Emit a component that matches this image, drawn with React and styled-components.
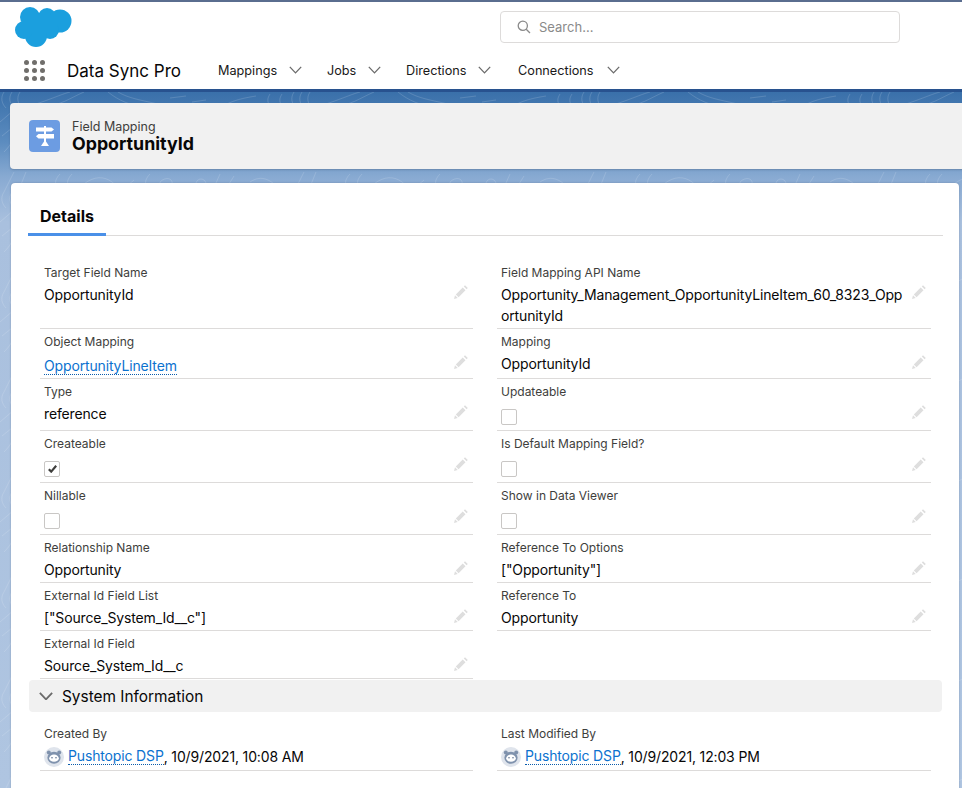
import React from "react";
import styled, { createGlobalStyle } from "styled-components";

const Global = createGlobalStyle`
  html, body { margin: 0; padding: 0; background: #fff; }
  body { font-family: Inter, "Liberation Sans", sans-serif; color: #080707; -webkit-font-smoothing: antialiased; }
  * { box-sizing: border-box; }
`;

const Page = styled.div`
  width: 962px;
  height: 788px;
  overflow: hidden;
  display: flex;
  flex-direction: column;
`;
const Strip = styled.div`
  height: 2px;
  background: #5a6d8f;
  flex: none;
`;
const Header = styled.header`
  height: 87px;
  flex: none;
  background: #fff;
  display: flex;
  flex-direction: column;
`;
const GlobalBar = styled.div`
  height: 50px;
  display: flex;
  align-items: flex-start;
  padding: 5px 0 0 15px;
`;
const SearchBox = styled.div`
  margin: 4px 0 0 428px;
  width: 400px;
  height: 32px;
  border: 1px solid #dddbda;
  border-radius: 4px;
  display: flex;
  align-items: center;
  gap: 8px;
  padding-left: 16px;
  font-size: 13px;
  color: #8a8a8a;
`;
const NavBar = styled.nav`
  flex: 1;
  display: flex;
  align-items: center;
  padding-left: 24px;
`;
const Waffle = styled.div`
  display: grid;
  grid-template-columns: repeat(3, 5px);
  gap: 3px;
  width: 21px;
  flex: none;
  span { width: 5px; height: 5px; border-radius: 50%; background: #706e6b; }
`;
const AppName = styled.div`
  font-size: 17px;
  margin-left: 22px;
  width: 151px;
  flex: none;
`;
const NavItem = styled.div`
  display: flex;
  align-items: center;
  font-size: 12.7px;
  color: #181818;
  width: ${p => p.$w}px;
  flex: none;
  gap: ${p => p.$gap}px;
`;
const Band = styled.main`
  flex: 1;
  min-height: 0;
  position: relative;
  border-top: 3px solid #28528f;
  background: linear-gradient(180deg, #3a70aa 0px, #5c8cbf 50px, #88aad2 85px, #a9c0de 130px, #afc5e1 100%);
  padding: 11px 0 0 0;
`;
const Topo = styled.svg`
  position: absolute;
  inset: 0;
  width: 100%;
  height: 100%;
`;
const HighlightCard = styled.section`
  position: relative;
  height: 66px;
  margin: 0 -10px 14px 10px;
  background: #f1f1f1;
  border-radius: 4px 0 0 4px;
  box-shadow: 0 1px 2px rgba(60, 80, 110, 0.35);
  display: flex;
  align-items: center;
  padding-left: 19px;
`;
const ObjectIcon = styled.div`
  width: 31px;
  height: 32px;
  flex: none;
  border-radius: 4px;
  background: #6c9ce2;
  display: flex;
  align-items: center;
  justify-content: center;
`;
const TitleBlock = styled.div`
  margin: 2px 0 0 12px;
`;
const ObjectType = styled.div`
  font-size: 12.5px;
  line-height: 14px;
  color: #3e3e3c;
`;
const ObjectTitle = styled.h1`
  margin: 0;
  font-size: 17.8px;
  line-height: 20px;
  font-weight: 700;
  color: #080707;
`;
const Card = styled.section`
  position: relative;
  margin: 0 3px 0 11px;
  height: 620px;
  background: #fff;
  border-radius: 4px 4px 0 0;
  padding: 0 16px 0 17px;
  box-shadow: 0 0 2px rgba(60, 80, 110, 0.4);
`;
const Tabs = styled.div`
  height: 53px;
  border-bottom: 1px solid #dddbda;
  display: flex;
  align-items: flex-end;
`;
const Tab = styled.div`
  width: 78px;
  height: 53px;
  padding: 23px 0 0 12px;
  font-size: 16px;
  line-height: 20px;
  font-weight: 700;
  margin-bottom: -1px;
  border-bottom: 3px solid #4a90e8;
`;
const FieldGrid = styled.div`
  margin: ${p => p.$mt}px 0 0 12px;
  display: grid;
  grid-template-columns: 433px 434px;
  column-gap: 24px;
  grid-template-rows: ${p => p.$rows};
`;
const Field = styled.div`
  border-bottom: 1px solid #dddbda;
  padding: ${p => p.$top || 5}px 4px 0;
  display: flex;
  align-items: flex-start;
  justify-content: space-between;
  min-width: 0;
`;
const FieldBody = styled.div`
  width: 403px;
  min-width: 0;
`;
const Label = styled.div`
  font-size: 12px;
  line-height: 15px;
  color: #3e3e3c;
`;
const Value = styled.div`
  font-size: 14px;
  line-height: 21px;
  letter-spacing: -0.15px;
  margin-top: ${p => p.$mt ?? 4}px;
  color: #080707;
  word-break: break-all;
  display: ${p => (p.$user ? "flex" : "block")};
  align-items: center;
`;
const Link = styled.a`
  color: #0b72cf;
  text-decoration: none;
  border-bottom: 1px dotted #0b5cab;
  line-height: 16px;
`;
const Box = styled.span`
  width: 16px;
  height: 16px;
  margin-top: 10px;
  border: 1px solid #c9c7c5;
  border-radius: 2px;
  display: flex;
  align-items: center;
  justify-content: center;
  background: #fff;
`;
const EditSlot = styled.div`
  width: 14px;
  height: 14px;
  flex: none;
  margin: ${p => p.$mt ?? 21}px 1px 0 0;
  line-height: 0;
`;
const SectionBar = styled.div`
  height: 32px;
  margin: 1px 0 0 1px;
  width: 913px;
  background: #f1f1f1;
  border-radius: 4px;
  display: flex;
  align-items: center;
  padding-left: 10px;
  gap: 9px;
  font-size: 15.4px;
  color: #080707;
`;
const Avatar = styled.svg`
  width: 20px;
  height: 20px;
  flex: none;
  margin-right: 4px;
`;

const Pencil = () => (
  <svg width="14" height="14" viewBox="0 0 14 14">
    <path d="M11 0.2 L13.8 3 L12.6 4.2 L9.8 1.4 Z M8.7 2.5 L11.5 5.3 L4.6 12.2 L1.8 9.4 Z M1 10.3 L3.7 13 L0 14 Z" fill="#dedede" />
  </svg>
);
const Chevron = ({ size = 13, color = "#6b6b6b", width = 1.3 }) => (
  <svg width={size} height={size * 0.62} viewBox="0 0 13 8" fill="none" style={{ flex: "none" }}>
    <path d="M0.8 0.8 L6.5 6.8 L12.2 0.8" stroke={color} strokeWidth={width} />
  </svg>
);
const Cloud = () => (
  <svg width="57" height="40" viewBox="0 0 57 40" fill="#1b9fde" style={{ flex: "none" }}>
    <circle cx="15" cy="10" r="10" /><circle cx="32" cy="10" r="9" /><circle cx="45" cy="14" r="11.5" />
    <circle cx="35" cy="23" r="9" /><circle cx="21" cy="29" r="11" /><circle cx="9" cy="23" r="9" />
    <rect x="10" y="8" width="32" height="18" />
  </svg>
);
const Signpost = () => (
  <svg width="18" height="21" viewBox="0 0 18 21" fill="#fff">
    <rect x="8" y="0" width="2" height="17" />
    <path d="M0 1.6 H15.5 L18 3.6 L15.5 5.6 H0 Z" />
    <path d="M18 8 H2.5 L0 10.2 L2.5 12.4 H18 Z" />
    <path d="M9 14 L13 20 H5 Z" />
  </svg>
);
const Bot = () => (
  <Avatar viewBox="0 0 20 20">
    <circle cx="10" cy="10" r="10" fill="#dfe4ec" />
    <circle cx="4.8" cy="5.6" r="2" fill="#7f92ad" /><circle cx="15.2" cy="5.6" r="2" fill="#7f92ad" />
    <ellipse cx="10" cy="10.8" rx="6.6" ry="6" fill="#7f92ad" />
    <ellipse cx="10" cy="11.2" rx="4.8" ry="3.6" fill="#fff" />
    <circle cx="8" cy="10.8" r="0.8" fill="#5e7290" /><circle cx="12" cy="10.8" r="0.8" fill="#5e7290" />
  </Avatar>
);
const Check = () => (
  <svg width="9" height="8" viewBox="0 0 9 8" fill="none">
    <path d="M0.8 4.2 L3.2 6.6 L8.2 0.8" stroke="#3e3e3c" strokeWidth="2.2" />
  </svg>
);

const F = ({ label, value, link, box, checked, mt, editTop }) => (
  <Field>
    <FieldBody>
      <Label>{label}</Label>
      {box ? (
        <Box>{checked && <Check />}</Box>
      ) : (
        <Value $mt={mt}>{link ? <Link>{value}</Link> : value}</Value>
      )}
    </FieldBody>
    <EditSlot $mt={editTop}><Pencil /></EditSlot>
  </Field>
);

const App = () => (
  <Page>
    <Global />
    <Strip />
    <Header>
      <GlobalBar>
        <Cloud />
        <SearchBox>
          <svg width="14" height="14" viewBox="0 0 14 14" fill="none" stroke="#8a8a8a" strokeWidth="1.3">
            <circle cx="5.8" cy="5.8" r="4.6" /><path d="M9.2 9.2 L13 13" />
          </svg>
          Search...
        </SearchBox>
      </GlobalBar>
      <NavBar>
        <Waffle>{Array.from({ length: 9 }, (_, i) => <span key={i} />)}</Waffle>
        <AppName>Data Sync Pro</AppName>
        <NavItem $w={109} $gap={12}>Mappings<Chevron /></NavItem>
        <NavItem $w={79} $gap={12}>Jobs<Chevron /></NavItem>
        <NavItem $w={112} $gap={12}>Directions<Chevron /></NavItem>
        <NavItem $w={110} $gap={13}>Connections<Chevron /></NavItem>
      </NavBar>
    </Header>
    <Band>
      <Topo aria-hidden="true">
        <defs>
          <pattern id="topo" width="290" height="100" patternUnits="userSpaceOnUse">
            <g fill="none" stroke="#fff" strokeOpacity="0.14" strokeWidth="1">
              <path d="M4 0 C0 6 2 12 6 16 M12 0 C8 6 10 12 14 16 M20 0 C16 6 18 12 22 16" />
              <path d="M44 14 C60 14 70 6 84 0 M36 12 C54 6 62 2 70 0" />
              <path d="M108 0 C118 8 130 14 150 16 M118 0 C128 6 140 8 158 12" />
              <path d="M170 6 L186 4 M192 10 L206 8 M220 16 C232 8 244 6 256 4" />
              <path d="M270 2 C266 8 268 12 272 16 M282 2 C278 8 280 12 284 16" />
              <path d="M14 80 L4 100 M26 80 L18 100 M60 82 C54 88 54 94 60 100 M72 82 C66 88 66 94 72 100" />
              <path d="M84 92 C94 84 104 84 112 90 C118 96 126 96 134 88" />
              <path d="M150 82 C144 88 144 94 150 100 M160 90 C166 84 174 86 172 94 C170 100 160 98 160 90" />
              <path d="M196 92 a5 5 0 1 0 10 0 a5 5 0 1 0 -10 0 M220 82 L212 100 M234 84 L224 100 M250 90 C262 82 272 88 282 100" />
              <path d="M0 30 L14 18 M2 44 L12 36 M4 60 C10 54 12 50 14 44" />
              <path d="M276 24 C284 34 286 44 288 56 M268 44 C274 54 278 60 282 72" />
            </g>
          </pattern>
        </defs>
        <rect width="100%" height="100%" fill="url(#topo)" />
      </Topo>
      <HighlightCard>
        <ObjectIcon><Signpost /></ObjectIcon>
        <TitleBlock>
          <ObjectType>Field Mapping</ObjectType>
          <ObjectTitle>OpportunityId</ObjectTitle>
        </TitleBlock>
      </HighlightCard>
      <Card>
        <Tabs><Tab>Details</Tab></Tabs>
        <FieldGrid $mt={24} $rows="69px 50px 52px 52px 52px 48px 48px 48px">
          <F label="Target Field Name" value="OpportunityId" editTop={20} />
          <F label="Field Mapping API Name" value="Opportunity_Management_OpportunityLineItem_60_8323_OpportunityId" editTop={20} />
          <F label="Object Mapping" value="OpportunityLineItem" link mt={6} />
          <F label="Mapping" value="OpportunityId" />
          <F label="Type" value="reference" />
          <F label="Updateable" box />
          <F label="Createable" box checked />
          <F label="Is Default Mapping Field?" box />
          <F label="Nillable" box />
          <F label="Show in Data Viewer" box />
          <F label="Relationship Name" value="Opportunity" />
          <F label="Reference To Options" value={'["Opportunity"]'} />
          <F label="External Id Field List" value={'["Source_System_Id__c"]'} />
          <F label="Reference To" value="Opportunity" />
          <F label="External Id Field" value="Source_System_Id__c" />
        </FieldGrid>
        <SectionBar><Chevron size={14} width={1.7} />System Information</SectionBar>
        <FieldGrid $mt={0} $rows="59px">
          <Field $top={14}>
            <FieldBody>
              <Label>Created By</Label>
              <Value $user $mt={5}><Bot /><Link>Pushtopic DSP</Link>, 10/9/2021, 10:08 AM</Value>
            </FieldBody>
          </Field>
          <Field $top={14}>
            <FieldBody>
              <Label>Last Modified By</Label>
              <Value $user $mt={5}><Bot /><Link>Pushtopic DSP</Link>, 10/9/2021, 12:03 PM</Value>
            </FieldBody>
          </Field>
        </FieldGrid>
      </Card>
    </Band>
  </Page>
);

export default App;
